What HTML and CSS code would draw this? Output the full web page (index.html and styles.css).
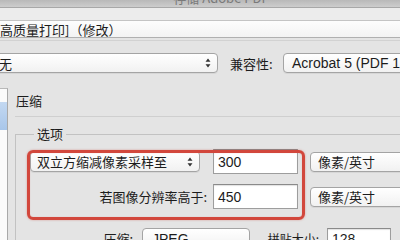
FILE: index.html
```html
<!DOCTYPE html>
<html lang="zh-CN">
<head>
<meta charset="utf-8">
<link rel="stylesheet" href="styles.css">
</head>
<body>
<div class="window">
  <div class="titlebar"><span class="title">存储 Adobe PDF</span></div>
  <div class="band"></div>
  <div class="preset">高质量打印]（修改）</div>
  <div class="spacer"></div>
  <div class="row1">
    <div class="select sel-std"><span>无</span>
      <svg class="arrows" width="6" height="10" viewBox="0 0 6 10"><path d="M3 0.5 L5.5 3.8 H0.5Z M3 9.5 L5.5 6.2 H0.5Z" fill="#333"/></svg>
    </div>
    <span class="label compat">兼容性:</span>
    <div class="select sel-acro"><span class="latin">Acrobat 5 (PDF 1.4)</span></div>
  </div>
  <div class="main">
    <div class="sidebar"><div class="sel-item"></div></div>
    <div class="content">
      <div class="heading">压缩</div>
      <fieldset class="group">
        <legend>选项</legend>
        <div class="grow">
          <div class="select sel-method"><span>双立方缩减像素采样至</span>
            <svg class="arrows" width="6" height="10" viewBox="0 0 6 10"><path d="M3 0.5 L5.5 3.8 H0.5Z M3 9.5 L5.5 6.2 H0.5Z" fill="#333"/></svg>
          </div>
          <div class="input"><span class="latin">300</span></div>
          <div class="select sel-unit"><span>像素/英寸</span></div>
        </div>
        <div class="grow">
          <span class="label rlabel">若图像分辨率高于:</span>
          <div class="input"><span class="latin">450</span></div>
          <div class="select sel-unit"><span>像素/英寸</span></div>
        </div>
        <div class="grow grow-c">
          <span class="label clabel">压缩:</span>
          <div class="select sel-comp"><span class="latin">JPEG</span></div>
          <span class="label tlabel">拼贴大小:</span>
          <div class="input input-tile"><span class="latin">128</span></div>
        </div>
        <div class="highlight"></div>
      </fieldset>
    </div>
  </div>
</div>
</body>
</html>
```
FILE: styles.css
```css
html, body {
  margin: 0;
  padding: 0;
}
body {
  width: 400px;
  height: 240px;
  overflow: hidden;
  background: #e4e4e4;
  font-family: "Noto Sans CJK SC", "Noto Sans", sans-serif;
  font-size: 13px;
  color: #1c1c1c;
}
.window {
  width: 400px;
  height: 240px;
  overflow: hidden;
  display: flex;
  flex-direction: column;
}
.titlebar {
  height: 7px;
  flex: none;
  background: linear-gradient(#b9b9b9, #cdcdcd);
  overflow: hidden;
  text-align: center;
  border-bottom: 1px solid #a8a8a8;
}
.title {
  display: block;
  margin-top: -9px;
  margin-left: 42px;
  font-size: 13px;
  line-height: 14px;
  color: #7a7a7a;
}
.band {
  height: 12px;
  flex: none;
  background: #ececec;
}
.preset {
  height: 18px;
  flex: none;
  box-sizing: border-box;
  background: linear-gradient(#fdfdfd, #f3f3f3);
  border-top: 1px solid #c4c4c4;
  border-bottom: 1px solid #b0b0b0;
  line-height: 17px;
  padding-left: 0;
  white-space: nowrap;
}
.spacer {
  height: 15px;
  flex: none;
  box-sizing: border-box;
  border-top: 1px solid #d2d2d2;
  margin-top: 2px;
  margin-bottom: -2px;
}
.row1 {
  height: 20px;
  flex: none;
  display: flex;
  align-items: center;
  white-space: nowrap;
}
.select {
  box-sizing: border-box;
  height: 20px;
  flex: none;
  display: flex;
  align-items: center;
  background: linear-gradient(#ffffff, #f1f1f1);
  border: 1px solid #a4a4a4;
  border-radius: 4px;
  box-shadow: 0 1px 0 rgba(0,0,0,0.06);
  position: relative;
  white-space: nowrap;
}
.arrows {
  position: absolute;
  right: 6px;
  top: 50%;
  margin-top: -5px;
}
.sel-std {
  width: 226px;
  margin-left: -8px;
  padding-left: 6px;
}
.label {
  flex: none;
  white-space: nowrap;
}
.compat {
  margin-left: 12px;
  width: 53px;
}
.sel-acro {
  width: 140px;
  padding-left: 8px;
}
.latin {
  font-family: "Liberation Sans", Arial, sans-serif;
  font-size: 14px;
  color: #1c1c1c;
}
.main {
  flex: 1;
  display: flex;
  margin-top: 15px;
  min-height: 0;
}
.sidebar {
  width: 7px;
  flex: none;
  background: #fbfbfb;
  border-right: 1px solid #a9a9a9;
  border-top: 1px solid #b8b8b8;
  padding-top: 13px;
  box-sizing: content-box;
}
.sel-item {
  height: 28px;
  background: linear-gradient(#c3d8f1, #a8c6ea);
}
.content {
  flex: 1;
  min-width: 0;
  display: flex;
  flex-direction: column;
}
.heading {
  height: 29px;
  box-sizing: border-box;
  padding-top: 5px;
  line-height: 16px;
  padding-left: 1px;
  margin-left: 7px;
  border-bottom: 1px solid #cfcfcf;
  margin-right: -20px;
  flex: none;
}
.group {
  position: relative;
  margin: 10px -40px 0 7px;
  padding: 8px 0 0 0;
  border: 1px solid #c2c2c2;
  border-bottom: none;
  min-inline-size: 0;
  flex: none;
}
.group legend {
  margin-left: 18px;
  padding: 0 3px;
  line-height: 14px;
  font-size: 13px;
}
.grow {
  display: flex;
  align-items: center;
  height: 25px;
  margin-bottom: 10px;
  padding-left: 14px;
}
.sel-method {
  width: 170px;
  height: 21px;
  padding-left: 6px;
  margin-right: 13px;
}
.input {
  box-sizing: border-box;
  width: 85px;
  height: 25px;
  flex: none;
  background: #fff;
  border: 1px solid #9d9d9d;
  border-top-color: #8a8a8a;
  box-shadow: inset 0 1px 1px rgba(0,0,0,0.12);
  display: flex;
  align-items: center;
  padding-left: 4px;
}
.sel-unit {
  width: 110px;
  height: 20px;
  margin-left: 12px;
  padding-left: 7px;
}
.rlabel {
  width: 177px;
  text-align: right;
  margin-right: 6px;
}
.grow-c {
  margin-top: 19px;
  align-items: flex-start;
}
.clabel {
  width: 103px;
  text-align: right;
  margin-right: 9px;
  line-height: 22px;
}
.sel-comp {
  width: 108px;
  height: 21px;
  padding-left: 9px;
  margin-right: 14px;
}
.tlabel {
  width: 55px;
  text-align: right;
  margin-right: 8px;
  font-size: 12px;
  line-height: 22px;
}
.input-tile {
  width: 64px;
  height: 22px;
}
.highlight {
  position: absolute;
  left: 11px;
  top: 9px;
  width: 278px;
  height: 70px;
  box-sizing: border-box;
  border: 3px solid #d2473c;
  border-radius: 6px;
  box-shadow: 0 0 2px rgba(210, 71, 60, 0.5), inset 0 0 1px rgba(210, 71, 60, 0.4);
  pointer-events: none;
}
```
